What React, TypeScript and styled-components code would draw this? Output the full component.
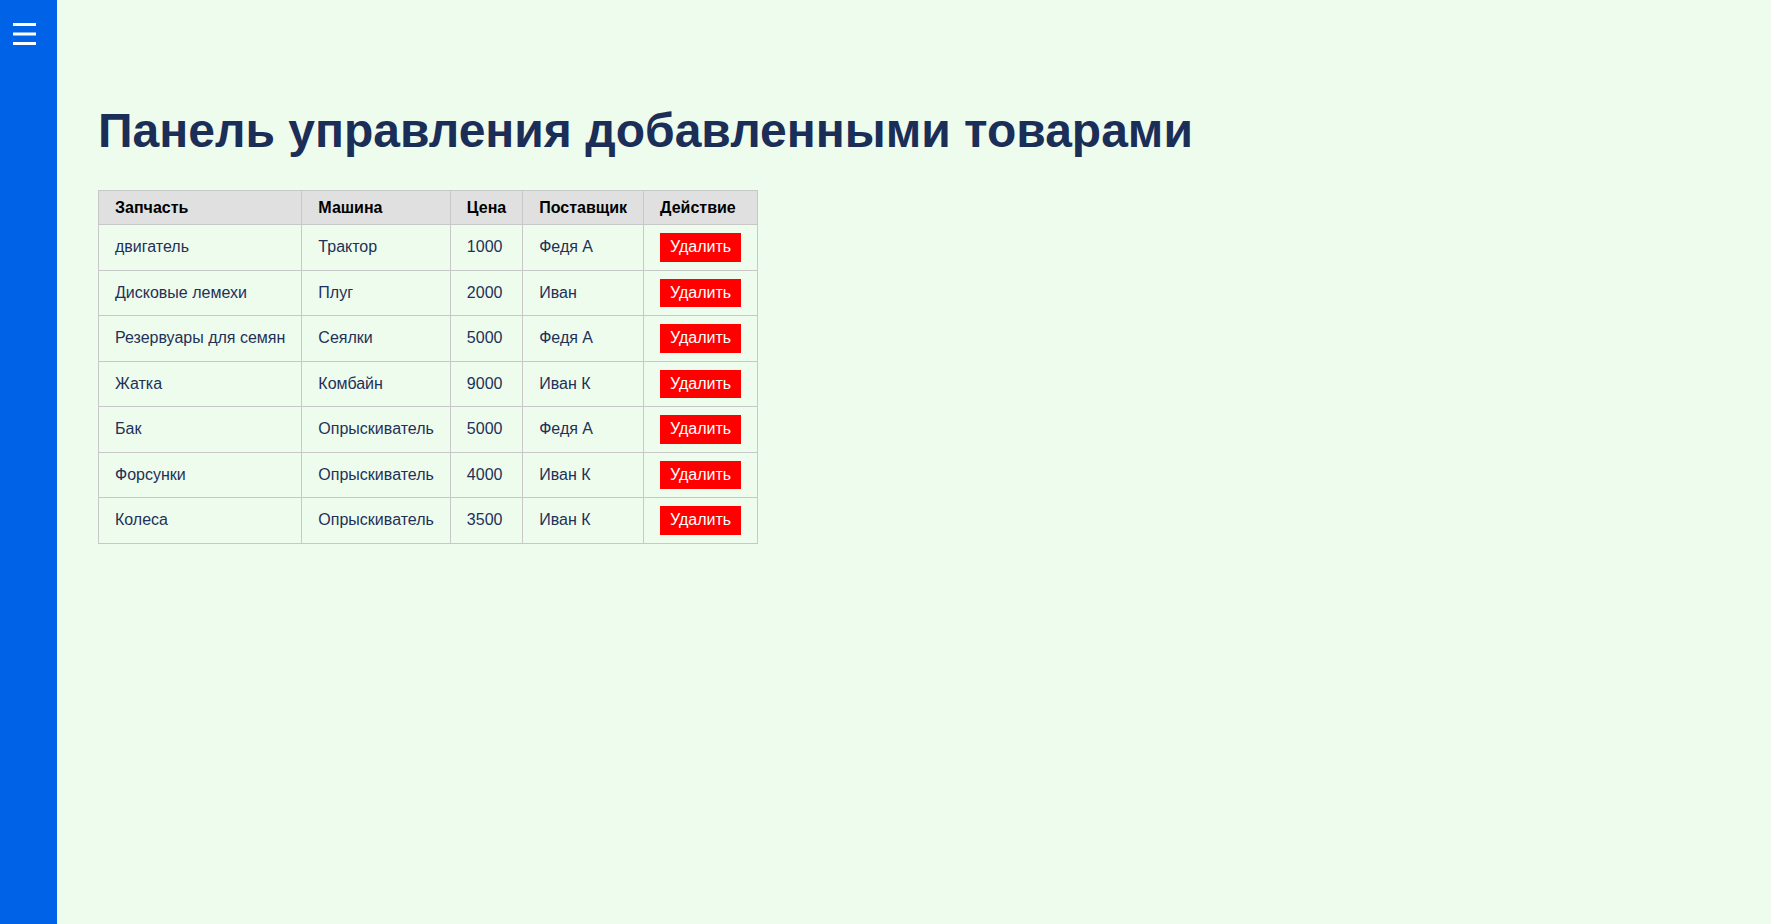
import React from "react";
import styled, { createGlobalStyle } from "styled-components";

const GlobalStyle = createGlobalStyle`
  html, body {
    margin: 0;
    padding: 0;
    background: #eefcee;
    font-family: "Liberation Sans", Arial, sans-serif;
  }
  #root {
    min-height: 100vh;
  }
`;

const Layout = styled.div`
  display: flex;
  min-height: 100vh;
`;

const Sidebar = styled.aside`
  width: 57px;
  flex: 0 0 57px;
  background: #0062e6;
  display: flex;
  flex-direction: column;
  align-items: flex-start;
  padding: 23px 0 0 13px;
  box-sizing: border-box;
`;

const MenuButton = styled.button`
  background: none;
  border: none;
  padding: 0;
  cursor: pointer;
  display: block;
  width: 23px;
  height: 22px;
`;

const Main = styled.main`
  flex: 1;
  padding: 70px 41px;
`;

const Title = styled.h1`
  font-size: 48px;
  font-weight: 700;
  color: #1b2e57;
  margin: 33px 0 32px;
  line-height: normal;
`;

const Table = styled.table`
  border-collapse: collapse;
  border: 1px solid #c8c8c8;
  font-size: 16px;
`;

const HeadCell = styled.th`
  background: #e0e0e0;
  color: #000;
  font-weight: 700;
  text-align: left;
  padding: 8px 16px;
  border: 1px solid #c8c8c8;
  line-height: 17px;
`;

const Cell = styled.td`
  color: #1e3158;
  padding: 8px 16px;
  border: 1px solid #c8c8c8;
  line-height: normal;
`;

const DeleteButton = styled.button`
  background: #ff0000;
  color: #fff;
  border: none;
  font-family: "Liberation Sans", Arial, sans-serif;
  font-size: 16px;
  line-height: 18.5px;
  padding: 5px 10px;
  cursor: pointer;
  display: block;
`;

type Row = { part: string; machine: string; price: number; supplier: string };

const rows: Row[] = [
  { part: "двигатель", machine: "Трактор", price: 1000, supplier: "Федя А" },
  { part: "Дисковые лемехи", machine: "Плуг", price: 2000, supplier: "Иван" },
  { part: "Резервуары для семян", machine: "Сеялки", price: 5000, supplier: "Федя А" },
  { part: "Жатка", machine: "Комбайн", price: 9000, supplier: "Иван К" },
  { part: "Бак", machine: "Опрыскиватель", price: 5000, supplier: "Федя А" },
  { part: "Форсунки", machine: "Опрыскиватель", price: 4000, supplier: "Иван К" },
  { part: "Колеса", machine: "Опрыскиватель", price: 3500, supplier: "Иван К" },
];

const MenuIcon = () => (
  <svg width="23" height="22" viewBox="0 0 23 22">
    <rect x="0" y="0" width="23" height="3" fill="#fff" />
    <rect x="0" y="9.5" width="23" height="3" fill="#fff" />
    <rect x="0" y="19" width="23" height="3" fill="#fff" />
  </svg>
);

export default function App() {
  return (
    <>
      <GlobalStyle />
      <Layout>
        <Sidebar>
          <MenuButton aria-label="Меню">
            <MenuIcon />
          </MenuButton>
        </Sidebar>
        <Main>
          <Title>Панель управления добавленными товарами</Title>
          <Table>
            <thead>
              <tr>
                <HeadCell>Запчасть</HeadCell>
                <HeadCell>Машина</HeadCell>
                <HeadCell>Цена</HeadCell>
                <HeadCell>Поставщик</HeadCell>
                <HeadCell>Действие</HeadCell>
              </tr>
            </thead>
            <tbody>
              {rows.map((r, i) => (
                <tr key={i}>
                  <Cell>{r.part}</Cell>
                  <Cell>{r.machine}</Cell>
                  <Cell>{r.price}</Cell>
                  <Cell>{r.supplier}</Cell>
                  <Cell>
                    <DeleteButton>Удалить</DeleteButton>
                  </Cell>
                </tr>
              ))}
            </tbody>
          </Table>
        </Main>
      </Layout>
    </>
  );
}
